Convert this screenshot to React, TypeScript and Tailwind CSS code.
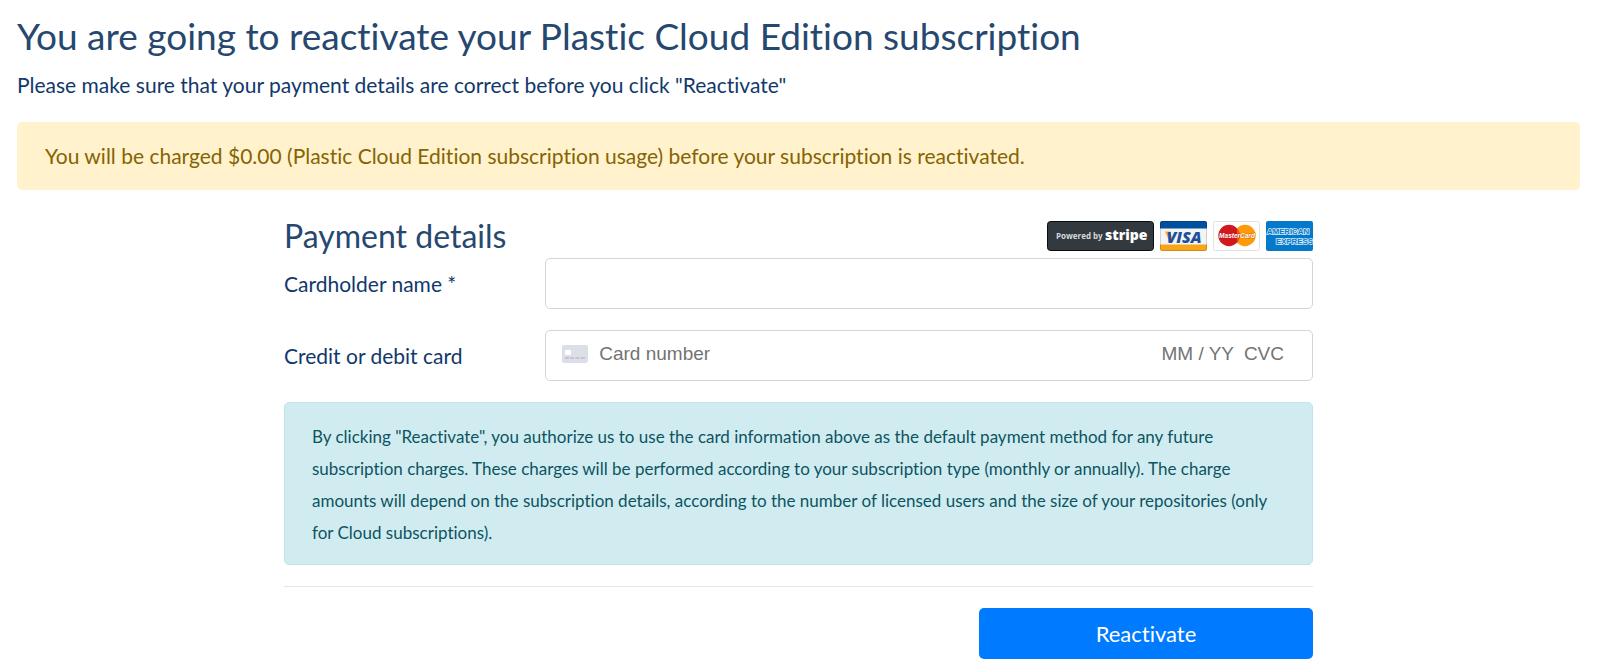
import React, { useState } from 'react';

const StripeBadge: React.FC = () => (
  <svg width="107" height="30" viewBox="0 0 107 30" role="img" aria-label="Powered by stripe">
    <rect x="0.5" y="0.5" width="106" height="29" rx="3" fill="#32393f" stroke="#0a0d0f" />
    <text x="9" y="18" fill="#d5d8da" fontFamily="'Open Sans', sans-serif" fontSize="8" fontWeight="700">Powered by</text>
    <text x="58" y="19" fill="#ffffff" fontFamily="'Open Sans', sans-serif" fontSize="14" fontWeight="800">stripe</text>
  </svg>
);

const VisaBadge: React.FC = () => (
  <svg width="47" height="30" viewBox="0 0 47 30" role="img" aria-label="Visa">
    <defs>
      <clipPath id="visa-card">
        <rect width="47" height="30" rx="2" />
      </clipPath>
    </defs>
    <g clipPath="url(#visa-card)">
      <rect width="47" height="30" fill="#f4f4f4" />
      <rect width="47" height="7.5" fill="#00509f" />
      <rect y="23.5" width="47" height="6.5" fill="#f9a51a" />
      <rect x="0.5" y="0.5" width="46" height="29" rx="2" fill="none" stroke="#000000" strokeOpacity="0.15" />
    </g>
    <path d="M5 10.5h5l2.5 9-2.5 2z" fill="#f9a51a" />
    <text x="24" y="22" textAnchor="middle" fill="#1c4f9c" fontFamily="'Open Sans', sans-serif" fontSize="16" fontWeight="800" fontStyle="italic">VISA</text>
  </svg>
);

const MasterCardBadge: React.FC = () => (
  <svg width="47" height="30" viewBox="0 0 47 30" role="img" aria-label="MasterCard">
    <rect x="0.5" y="0.5" width="46" height="29" rx="2" fill="#ffffff" stroke="#dfe3e6" />
    <circle cx="32" cy="14.5" r="10.7" fill="#ff9a0a" />
    <circle cx="16" cy="14.5" r="10.7" fill="#d2171e" />
    <path d="M24 7.4a10.7 10.7 0 0 1 0 14.2z" fill="#ee5a12" />
    <text x="24" y="17" textAnchor="middle" fill="#ffffff" stroke="#8e1a12" strokeOpacity="0.4" strokeWidth="0.8" paintOrder="stroke" fontFamily="'Liberation Sans', sans-serif" fontSize="6.5" fontWeight="700" fontStyle="italic">MasterCard</text>
  </svg>
);

const AmexBadge: React.FC = () => (
  <svg width="47" height="30" viewBox="0 0 47 30" role="img" aria-label="American Express">
    <rect width="47" height="30" rx="2" fill="#0479c9" />
    <g fill="#0479c9" stroke="#d3eafa" strokeWidth="1.6" paintOrder="stroke" fontFamily="'Liberation Sans', sans-serif" fontSize="7.8" fontWeight="700">
      <text x="1" y="13">AMERICAN</text>
      <text x="10" y="22.5">EXPRESS</text>
    </g>
  </svg>
);

const CardIcon: React.FC = () => (
  <svg width="26" height="18" viewBox="0 0 26 18" className="shrink-0" aria-hidden="true">
    <rect width="26" height="18" rx="2" fill="#dcdfe8" />
    <rect x="3" y="5" width="6" height="5" rx="1" fill="#ffffff" />
    <path d="M3 13h20" stroke="#b9bdcb" strokeWidth="1.6" strokeDasharray="4 1.3" />
  </svg>
);

const App: React.FC = () => {
  const [name, setName] = useState('');
  const [cardNumber, setCardNumber] = useState('');
  const [expiry, setExpiry] = useState('');
  const [cvc, setCvc] = useState('');

  const handleSubmit = (e: React.FormEvent) => {
    e.preventDefault();
  };

  return (
    <main className="min-h-screen bg-white pt-3 pr-5 pb-2.5 pl-[17px] font-['Lato',sans-serif] text-[21px] leading-8 text-[#12386b] [font-variant-ligatures:none]">
      {/* Header */}
      <h1 className="text-[37px] leading-[48px] text-[#26486f]">
        You are going to reactivate your Plastic Cloud Edition subscription
      </h1>
      <p className="mt-[9px]">Please make sure that your payment details are correct before you click "Reactivate"</p>

      <div role="alert" className="mt-[21px] rounded-[5px] bg-[#fff2cd] px-7 py-[18px] text-[#856404]">
        You will be charged $0.00 (Plastic Cloud Edition subscription usage) before your subscription is reactivated.
      </div>

      {/* Payment form */}
      <form onSubmit={handleSubmit} className="mx-auto mt-7 max-w-[1029px]">
        <div className="flex items-center justify-between pb-1">
          <h2 className="text-[32px] leading-9 text-[#26486f]">Payment details</h2>
          <div className="flex items-center gap-1.5">
            <StripeBadge />
            <VisaBadge />
            <MasterCardBadge />
            <AmexBadge />
          </div>
        </div>

        <div className="flex items-center gap-1">
          <label htmlFor="cardholder" className="w-1/4 shrink-0">Cardholder name *</label>
          <input
            id="cardholder"
            type="text"
            value={name}
            onChange={e => setName(e.target.value)}
            className="h-[51px] min-w-0 flex-1 rounded-[5px] border border-[#d0d6de] px-4 focus:outline-none"
          />
        </div>

        <div className="mt-[21px] flex items-center gap-1">
          <label htmlFor="card-number" className="w-1/4 shrink-0">Credit or debit card</label>
          <div className="flex h-[51px] min-w-0 flex-1 items-center rounded-[5px] border border-[#d0d6de] pr-7 pb-1 pl-4 font-['Liberation_Sans',sans-serif] text-[19px]">
            <CardIcon />
            <input
              id="card-number"
              type="text"
              placeholder="Card number"
              value={cardNumber}
              onChange={e => setCardNumber(e.target.value)}
              className="ml-[11px] min-w-0 flex-1 placeholder:text-[#737373] focus:outline-none"
            />
            <input
              type="text"
              aria-label="Expiry date"
              placeholder="MM / YY"
              value={expiry}
              onChange={e => setExpiry(e.target.value)}
              className="w-20 text-right placeholder:text-[#737373] focus:outline-none"
            />
            <input
              type="text"
              aria-label="CVC"
              placeholder="CVC"
              value={cvc}
              onChange={e => setCvc(e.target.value)}
              className="w-[50px] text-right placeholder:text-[#737373] focus:outline-none"
            />
          </div>
        </div>

        <div className="mt-[21px] rounded-[5px] border border-[#bee5eb] bg-[#d1ecf1] px-[27px] pt-[18px] pb-[15px] text-[17px] text-[#0c5460]">
          By clicking "Reactivate", you authorize us to use the card information above as the default payment method for any future subscription charges. These charges will be performed according to your subscription type (monthly or annually). The charge amounts will depend on the subscription details, according to the number of licensed users and the size of your repositories (only for Cloud subscriptions).
        </div>

        <hr className="my-[21px] border-[#e5e5e5]" />

        <div className="flex justify-end">
          <button type="submit" className="h-[51px] w-[334px] rounded-[5px] bg-[#007bff] text-[22px] text-white">
            Reactivate
          </button>
        </div>
      </form>
    </main>
  );
};

export default App;
